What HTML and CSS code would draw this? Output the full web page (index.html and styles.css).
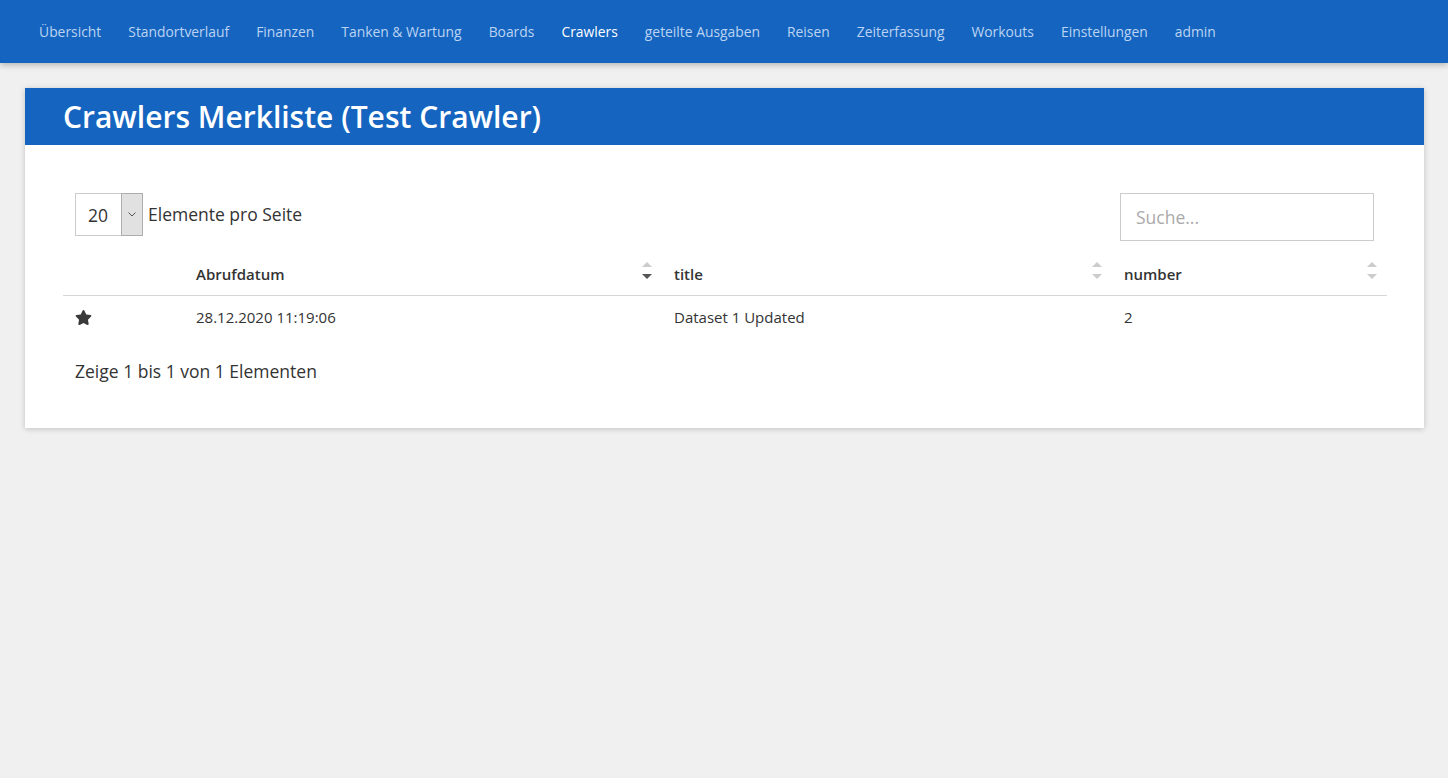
FILE: index.html
```html
<!DOCTYPE html>
<html lang="de">
<head>
<meta charset="utf-8">
<title>Crawlers Merkliste</title>
<link rel="stylesheet" href="styles.css">
</head>
<body>
<nav class="navbar">
  <a class="nav-link">Übersicht</a>
  <a class="nav-link">Standortverlauf</a>
  <a class="nav-link">Finanzen</a>
  <a class="nav-link">Tanken &amp; Wartung</a>
  <a class="nav-link">Boards</a>
  <a class="nav-link active">Crawlers</a>
  <a class="nav-link">geteilte Ausgaben</a>
  <a class="nav-link">Reisen</a>
  <a class="nav-link">Zeiterfassung</a>
  <a class="nav-link">Workouts</a>
  <a class="nav-link">Einstellungen</a>
  <a class="nav-link">admin</a>
</nav>
<main class="page">
  <section class="card">
    <header class="card-header">
      <h1 class="card-title">Crawlers Merkliste (Test Crawler)</h1>
    </header>
    <div class="card-body">
      <div class="controls">
        <label class="length">
          <span class="select">
            <span class="select-value">20</span>
            <span class="select-btn">
              <svg width="8" height="5" viewBox="0 0 8 5"><path d="M0.5 0.5 L4 4 L7.5 0.5" fill="none" stroke="#555" stroke-width="1"/></svg>
            </span>
          </span>
          <span class="length-text">Elemente pro Seite</span>
        </label>
        <input class="search" type="text" placeholder="Suche...">
      </div>
      <table class="table">
        <thead>
          <tr>
            <th class="col-icon"></th>
            <th class="col-date sortable">Abrufdatum<span class="sort"><span class="up"></span><span class="down active"></span></span></th>
            <th class="col-title sortable">title<span class="sort"><span class="up"></span><span class="down"></span></span></th>
            <th class="col-number sortable">number<span class="sort"><span class="up"></span><span class="down"></span></span></th>
          </tr>
        </thead>
        <tbody>
          <tr>
            <td class="col-icon">
              <svg class="star" width="17" height="15" viewBox="0 0 576 512"><path d="M259.3 17.8L194 150.2 47.9 171.5c-26.2 3.8-36.7 36.1-17.7 54.6l105.7 103-25 145.5c-4.5 26.300 23.2 46 46.4 33.7L288 439.6l130.7 68.7c23.2 12.2 50.9-7.4 46.4-33.7l-25-145.5 105.7-103c19-18.5 8.5-50.8-17.7-54.6L382 150.2 316.7 17.8c-11.7-23.6-45.6-23.9-57.4 0z" fill="#3a3a3a"/></svg>
            </td>
            <td>28.12.2020 11:19:06</td>
            <td>Dataset 1 Updated</td>
            <td>2</td>
          </tr>
        </tbody>
      </table>
      <div class="info">Zeige 1 bis 1 von 1 Elementen</div>
    </div>
  </section>
</main>
</body>
</html>
```
FILE: styles.css
```css
* { box-sizing: border-box; }
html, body {
  margin: 0;
  padding: 0;
  background: #f0f0f0;
  font-family: "Open Sans", "Liberation Sans", sans-serif;
  color: #333;
}
.navbar {
  height: 63px;
  background: #1565c0;
  display: flex;
  align-items: center;
  padding: 0 0 0 25.5px;
  box-shadow: 0 2px 6px rgba(0,0,0,0.25);
}
.nav-link {
  font-size: 13.85px;
  color: #bcd3f2;
  padding: 0 13.55px;
  text-decoration: none;
  line-height: 20px;
}
.nav-link.active { color: #ffffff; }
.page {
  padding: 25px 24px 25px 25px;
}
.card {
  background: #fff;
  box-shadow: 0 1px 6px rgba(0,0,0,0.2);
}
.card-header {
  background: #1565c0;
  height: 57px;
  display: flex;
  align-items: center;
  padding-left: 38px;
}
.card-title {
  margin: 0;
  color: #fff;
  font-size: 30px;
  font-weight: 600;
  line-height: 36px;
}
.card-body {
  padding: 48px 37px 45px 38px;
}
.controls {
  display: flex;
  justify-content: space-between;
  align-items: flex-start;
  padding: 0 13px 0 12px;
}
.length {
  display: flex;
  align-items: center;
  font-size: 17.5px;
  color: #333;
}
.select {
  display: flex;
  width: 68px;
  height: 43px;
  border: 1px solid #ccc;
  background: #fff;
}
.select-value {
  flex: 1;
  display: flex;
  align-items: center;
  padding-left: 12px;
  font-size: 17.5px;
  color: #333;
}
.select-btn {
  width: 22px;
  background: #e1e1e1;
  border: 1px solid #adadad;
  margin: -1px -1px -1px 0;
  display: flex;
  align-items: center;
  justify-content: center;
}
.length-text { margin-left: 5px; margin-top: -1px; }
.search {
  width: 254px;
  height: 48px;
  border: 1px solid #ccc;
  padding: 0 15px;
  font-family: inherit;
  font-size: 17.5px;
  color: #333;
  outline: none;
}
.search::placeholder { color: #aaa; }
.table {
  width: 100%;
  border-collapse: collapse;
  margin-top: 13px;
  font-size: 15px;
}
.table th {
  text-align: left;
  font-weight: 600;
  padding: 10px 12px 11px;
  line-height: 20px;
  border-bottom: 1px solid #d6d6d6;
  position: relative;
  color: #333;
}
.table td {
  padding: 11px 12px 13px;
  line-height: 20px;
  color: #333;
}
.col-icon { width: 121px; }
.col-date { width: 478px; }
.col-title { width: 450px; }
.sort {
  position: absolute;
  right: 10px;
  top: 8px;
  display: flex;
  flex-direction: column;
  gap: 7px;
}
.sort .up {
  width: 0; height: 0;
  border-left: 5px solid transparent;
  border-right: 5px solid transparent;
  border-bottom: 5px solid #ccc;
}
.sort .down {
  width: 0; height: 0;
  border-left: 5px solid transparent;
  border-right: 5px solid transparent;
  border-top: 5px solid #ccc;
}
.sort .down.active { border-top-color: #555; }
.star { display: block; }
.info {
  font-size: 17.5px;
  margin-top: 19px;
  padding-left: 12px;
  line-height: 24px;
}
```
